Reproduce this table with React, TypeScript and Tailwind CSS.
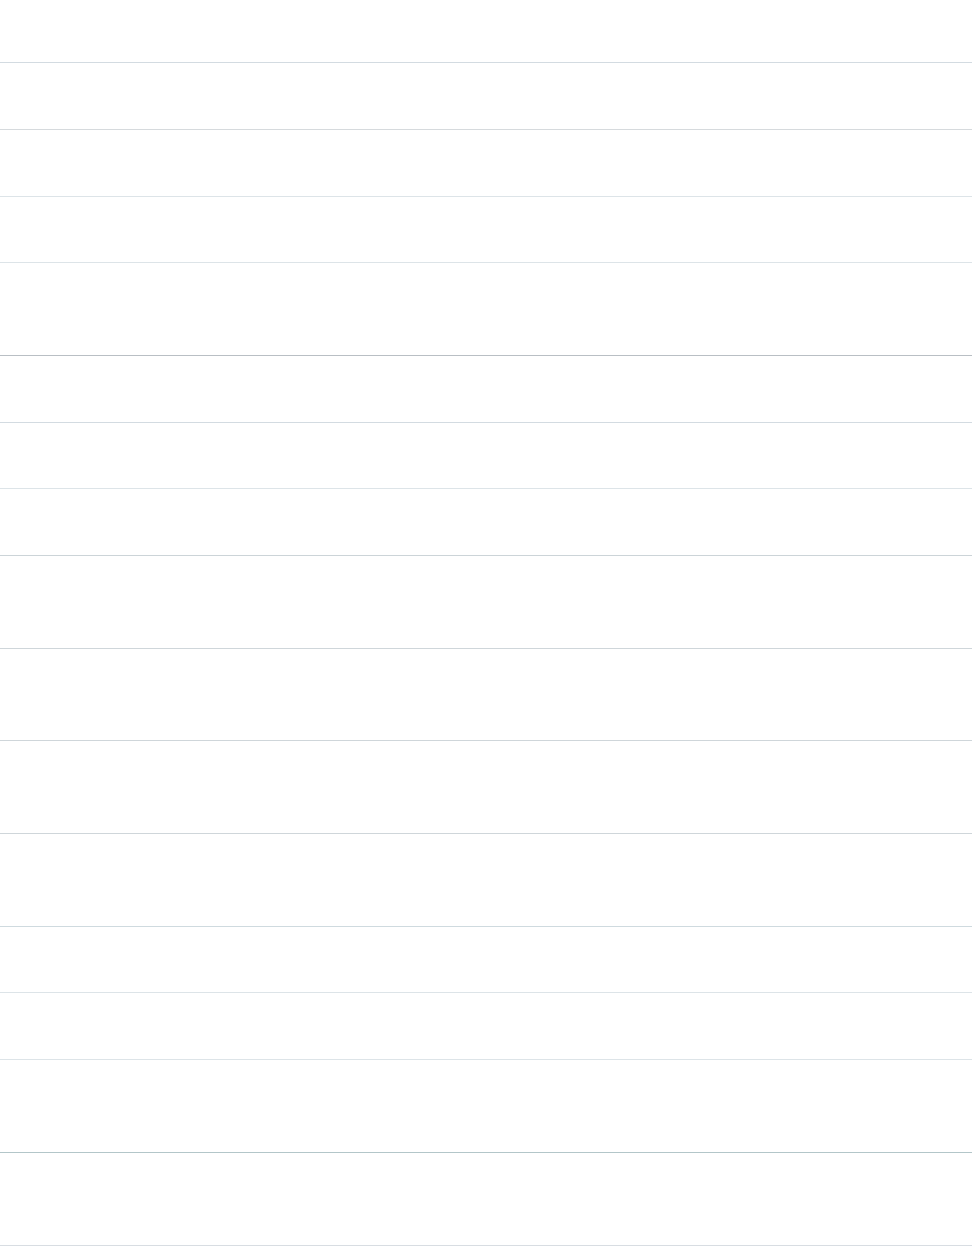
import React from "react";

const rows: { h: string; c: string }[] = [
  { h: "h-[63px]", c: "border-[#d3dbe1]" },
  { h: "h-[67px]", c: "border-[#d6dadd]" },
  { h: "h-[67px]", c: "border-[#dde4e8]" },
  { h: "h-[66px]", c: "border-[#dde4e8]" },
  { h: "h-[93px]", c: "border-[#b9bfc4]" },
  { h: "h-[67px]", c: "border-[#d3dbe1]" },
  { h: "h-[66px]", c: "border-[#dde4e8]" },
  { h: "h-[67px]", c: "border-[#ccd4d8]" },
  { h: "h-[93px]", c: "border-[#cfd6da]" },
  { h: "h-[92px]", c: "border-[#cfd6da]" },
  { h: "h-[93px]", c: "border-[#cfd6da]" },
  { h: "h-[93px]", c: "border-[#cfdadf]" },
  { h: "h-[66px]", c: "border-[#dde4e8]" },
  { h: "h-[67px]", c: "border-[#dde4e8]" },
  { h: "h-[93px]", c: "border-[#b3c6c9]" },
  { h: "h-[93px]", c: "border-[#d8dde2]" },
];

export default function App() {
  return (
    <div className="w-[973px] bg-white font-['Liberation_Sans',sans-serif]">
      <div className="w-[972px]">
        {rows.map((r, i) => (
          <div key={i} className={`${r.h} border-b ${r.c}`} />
        ))}
      </div>
    </div>
  );
}
